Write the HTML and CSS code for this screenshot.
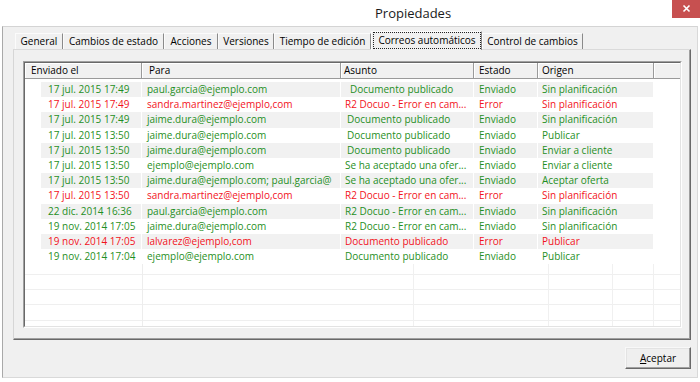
FILE: index.html
```html
<!DOCTYPE html>
<html lang="es">
<head>
<meta charset="utf-8">
<title>Propiedades</title>
<link rel="stylesheet" href="styles.css">
</head>
<body>
<div class="titlebar">
  <span class="title">Propiedades</span>
  <div class="close"><svg width="28" height="18" viewBox="0 0 28 18"><path d="M11.5 5.5 L17.5 11.5 M17.5 5.5 L11.5 11.5" stroke="#fff" stroke-width="1.6" fill="none"/></svg></div>
</div>
<div class="client">
  <div class="tabs">
    <div class="tab t1">General</div>
    <div class="tab t2">Cambios de estado</div>
    <div class="tab t3">Acciones</div>
    <div class="tab t4">Versiones</div>
    <div class="tab t5">Tiempo de edición</div>
    <div class="tab t6 sel"><span class="focus">Correos automáticos</span></div>
    <div class="tab t7">Control de cambios</div>
  </div>
  <div class="panel">
    <div class="list">
      <div class="list-in">
        <div class="hdr">
          <div class="h h1">Enviado el</div>
          <div class="h h2">Para</div>
          <div class="h h3">Asunto</div>
          <div class="h h4">Estado</div>
          <div class="h h5">Origen</div>
          <div class="h hf"></div>
        </div>
        <div class="rows">
          <div class="row ok alt"><div class="c0"></div><div class="c c1">17 jul. 2015 17:49</div><div class="c c2">paul.garcia@ejemplo.com</div><div class="c c3 in5">Documento publicado</div><div class="c c4">Enviado</div><div class="c c5">Sin planificación</div><div class="c6"></div></div>
          <div class="row err"><div class="c0"></div><div class="c c1">17 jul. 2015 17:49</div><div class="c c2">sandra.martinez@ejemplo,com</div><div class="c c3">R2 Docuo - Error en cam...</div><div class="c c4">Error</div><div class="c c5">Sin planificación</div><div class="c6"></div></div>
          <div class="row ok alt"><div class="c0"></div><div class="c c1">17 jul. 2015 17:49</div><div class="c c2">jaime.dura@ejemplo.com</div><div class="c c3 in2">Documento publicado</div><div class="c c4">Enviado</div><div class="c c5">Sin planificación</div><div class="c6"></div></div>
          <div class="row ok"><div class="c0"></div><div class="c c1">17 jul. 2015 13:50</div><div class="c c2">jaime.dura@ejemplo.com</div><div class="c c3 in2">Documento publicado</div><div class="c c4">Enviado</div><div class="c c5">Publicar</div><div class="c6"></div></div>
          <div class="row ok alt"><div class="c0"></div><div class="c c1">17 jul. 2015 13:50</div><div class="c c2">jaime.dura@ejemplo.com</div><div class="c c3 in2">Documento publicado</div><div class="c c4">Enviado</div><div class="c c5">Enviar a cliente</div><div class="c6"></div></div>
          <div class="row ok"><div class="c0"></div><div class="c c1">17 jul. 2015 13:50</div><div class="c c2">ejemplo@ejemplo.com</div><div class="c c3">Se ha aceptado una ofer...</div><div class="c c4">Enviado</div><div class="c c5">Enviar a cliente</div><div class="c6"></div></div>
          <div class="row ok alt"><div class="c0"></div><div class="c c1">17 jul. 2015 13:50</div><div class="c c2">jaime.dura@ejemplo.com; paul.garcia@</div><div class="c c3">Se ha aceptado una ofer...</div><div class="c c4">Enviado</div><div class="c c5">Aceptar oferta</div><div class="c6"></div></div>
          <div class="row err"><div class="c0"></div><div class="c c1">17 jul. 2015 13:50</div><div class="c c2">sandra.martinez@ejemplo,com</div><div class="c c3">R2 Docuo - Error en cam...</div><div class="c c4">Error</div><div class="c c5">Sin planificación</div><div class="c6"></div></div>
          <div class="row ok alt"><div class="c0"></div><div class="c c1">22 dic. 2014 16:36</div><div class="c c2">paul.garcia@ejemplo.com</div><div class="c c3">R2 Docuo - Error en cam...</div><div class="c c4">Enviado</div><div class="c c5">Sin planificación</div><div class="c6"></div></div>
          <div class="row ok"><div class="c0"></div><div class="c c1">19 nov. 2014 17:05</div><div class="c c2">jaime.dura@ejemplo.com</div><div class="c c3">R2 Docuo - Error en cam...</div><div class="c c4">Enviado</div><div class="c c5">Sin planificación</div><div class="c6"></div></div>
          <div class="row err alt"><div class="c0"></div><div class="c c1">19 nov. 2014 17:05</div><div class="c c2">lalvarez@ejemplo,com</div><div class="c c3">Documento publicado</div><div class="c c4">Error</div><div class="c c5">Publicar</div><div class="c6"></div></div>
          <div class="row ok"><div class="c0"></div><div class="c c1">19 nov. 2014 17:04</div><div class="c c2">ejemplo@ejemplo.com</div><div class="c c3">Documento publicado</div><div class="c c4">Enviado</div><div class="c c5">Publicar</div><div class="c6"></div></div>
        </div>
        <div class="grid"></div>
      </div>
    </div>
  </div>
  <div class="actions">
    <button class="btn"><u>A</u>ceptar</button>
  </div>
</div>
</body>
</html>
```

FILE: styles.css
```css
html, body {
  margin: 0;
  padding: 0;
}
body {
  width: 700px;
  height: 382px;
  overflow: hidden;
  background: #fff;
  font-family: "Open Sans", "Noto Sans", sans-serif;
  font-size: 10px;
  color: #000;
}
.titlebar {
  height: 26px;
  display: flex;
  align-items: flex-start;
  background: #fff;
}
.title {
  margin-left: 375px;
  line-height: 27px;
  font-size: 13px;
  color: #1a1a1a;
}
.close {
  margin-left: auto;
  width: 28px;
  height: 18px;
  background: #c75050;
}
.close svg {
  display: block;
}
.client {
  box-sizing: border-box;
  margin-left: 2px;
  width: 696px;
  height: 352px;
  background: #f0f0f0;
  border-left: 1px solid #a9a9a9;
  border-top: 1px solid #d4d4d4;
  border-right: 1px solid #d9d9d9;
  border-bottom: 1px solid #d9d9d9;
  padding: 4px 6px 8px 10px;
  display: flex;
  flex-direction: column;
}
.tabs {
  height: 18px;
  display: flex;
  align-items: flex-end;
  padding-left: 2px;
}
.tab {
  box-sizing: border-box;
  height: 16px;
  line-height: 14px;
  text-align: center;
  white-space: nowrap;
  border-top: 1px solid #fbfbfb;
  border-left: 1px solid #fbfbfb;
  border-right: 1px solid #8a8a8a;
  color: #000;
}
.t1 { width: 48px; }
.t2 { width: 101px; }
.t3 { width: 54px; }
.t4 { width: 56px; }
.t5 { width: 97px; }
.t6 { width: 111px; }
.t7 { width: 101px; }
.tab.sel {
  height: 19px;
  margin-bottom: -1px;
  position: relative;
  z-index: 1;
  background: #f0f0f0;
}
.focus {
  display: block;
  margin: 0 0 0 1px;
  height: 17px;
  box-sizing: border-box;
  border: 1px dotted #222;
  line-height: 14px;
}
.panel {
  box-sizing: border-box;
  width: 678px;
  height: 291px;
  border-top: 1px solid #dadada;
  border-left: 1px solid #d6d6d6;
  border-right: 1px solid #696969;
  border-bottom: 1px solid #696969;
  box-shadow: inset -1px -1px 0 #a0a0a0;
  padding: 11px 8px 11px 9px;
}
.list {
  box-sizing: border-box;
  width: 659px;
  height: 267px;
  border-style: solid;
  border-width: 1px;
  border-color: #a0a0a0 #fff #fff #a0a0a0;
}
.list-in {
  box-sizing: border-box;
  height: 100%;
  border-style: solid;
  border-width: 1px;
  border-color: #696969 #e3e3e3 #e3e3e3 #696969;
  background: #fff;
  display: flex;
  flex-direction: column;
  overflow: hidden;
}
.hdr {
  display: flex;
  height: 16px;
  flex: none;
}
.h {
  box-sizing: border-box;
  height: 16px;
  line-height: 15px;
  padding-left: 5px;
  background: #f1f1f1;
  border-right: 1px solid #9a9a9a;
  border-bottom: 1px solid #9a9a9a;
  box-shadow: inset 1px 1px 0 #fff;
  white-space: nowrap;
}
.h1 { width: 117px; padding-left: 6px; }
.h2 { width: 199px; padding-left: 7px; }
.h3 { width: 133px; padding-left: 3px; }
.h4 { width: 64px; }
.h5 { width: 116px; padding-left: 4px; }
.hf { flex: 1; border-right: none; }
.rows {
  padding-top: 3px;
  flex: none;
}
.row {
  display: flex;
  height: 15.2px;
  line-height: 15.2px;
}
.row.ok { color: #1f8f24; }
.row.err { color: #f2121c; }
.c0 { width: 16px; flex: none; }
.c {
  box-sizing: border-box;
  flex: none;
  white-space: nowrap;
  overflow: hidden;
  border-right: 1px solid #fff;
  padding-left: 5px;
}
.row.alt .c { background: #f1f1f1; }
.c1 { width: 101px; padding-left: 7px; }
.c2 { width: 199px; }
.c3 { width: 133px; padding-left: 4px; }
.c3.in2 { padding-left: 6px; }
.c3.in5 { padding-left: 9px; }
.c4 { width: 64px; }
.c5 { width: 116px; padding-left: 4px; }
.c6 { flex: 1; }
.grid {
  flex: 1;
  background:
    linear-gradient(#ededed, #ededed) 117px 0 / 1px 100% no-repeat,
    linear-gradient(#f0f0f0, #f0f0f0) 388px 0 / 1px 100% no-repeat,
    linear-gradient(#f0f0f0, #f0f0f0) 523px 0 / 1px 100% no-repeat,
    linear-gradient(#f0f0f0, #f0f0f0) 587px 0 / 1px 100% no-repeat,
    linear-gradient(#f0f0f0, #f0f0f0) 628px 0 / 1px 100% no-repeat,
    linear-gradient(#efefef, #efefef) 0 10px / 100% 1px no-repeat,
    linear-gradient(#efefef, #efefef) 0 25px / 100% 1px no-repeat,
    linear-gradient(#efefef, #efefef) 0 40px / 100% 1px no-repeat,
    linear-gradient(#efefef, #efefef) 0 56px / 100% 1px no-repeat,
    #fff;
}
.actions {
  display: flex;
  justify-content: flex-end;
  margin-top: 7px;
  padding-right: 0;
}
.btn {
  box-sizing: border-box;
  width: 66px;
  height: 22px;
  margin: 0;
  padding: 0 0 1px 0;
  font-family: "Open Sans", "Noto Sans", sans-serif;
  font-size: 10px;
  color: #000;
  background: #efefef;
  border-style: solid;
  border-width: 1px;
  border-color: #f8f8f8 #696969 #696969 #f8f8f8;
  box-shadow: inset -1px -1px 0 #a0a0a0, inset 1px 1px 0 #e3e3e3;
  border-radius: 0;
}
.btn u {
  text-decoration: underline;
}
```
